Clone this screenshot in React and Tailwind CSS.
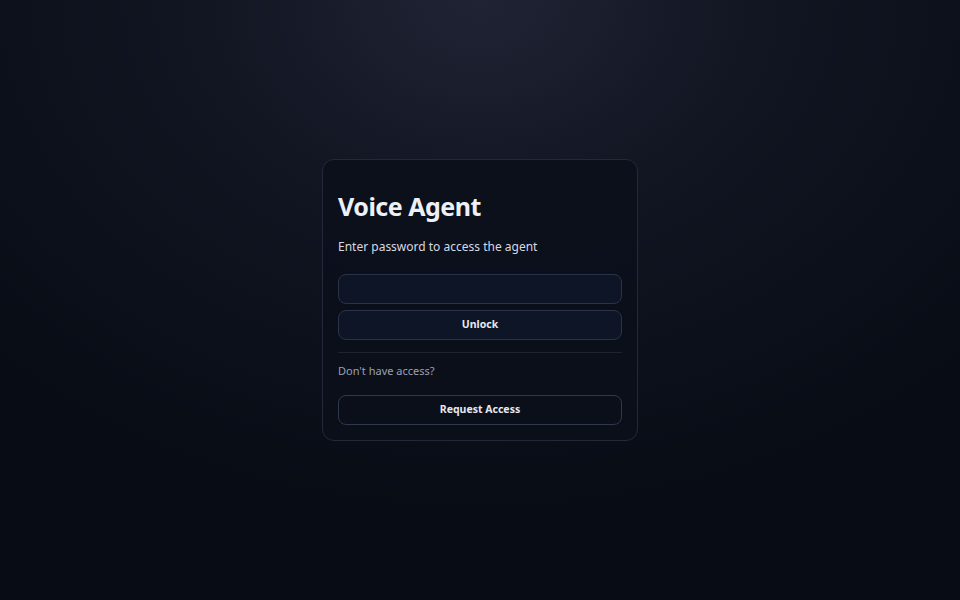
export default function App() {
  return (
    <div
      className="w-full h-[600px] flex items-center justify-center bg-[radial-gradient(ellipse_70%_85%_at_50%_0%,#1f2334_0%,#111521_45%,#080c15_100%)]"
      style={{ fontFamily: '"Noto Sans", sans-serif' }}
    >
      <div className="w-[316px] rounded-[12px] border border-[#222a3a] bg-[#0b101b]/90 px-[15px] pt-[30px] pb-[15px] flex flex-col">
        <h1 className="text-[25px] leading-[32px] font-bold tracking-[-0.02em] text-[#eef0f8]">Voice Agent</h1>
        <p className="mt-[15px] text-[12px] leading-[20px] text-[#d6d9e3]">Enter password to access the agent</p>
        <input
          type="password"
          className="mt-[17px] h-[30px] w-full rounded-[8px] border border-[#2a3348] bg-[#0d1526] outline-none"
        />
        <button className="mt-[6px] h-[30px] w-full rounded-[8px] border border-[#2a3348] bg-[#0d1526] text-[10.5px] font-bold text-[#e6e8f0]">
          Unlock
        </button>
        <div className="mt-[12px] h-[1px] bg-[#1d2330]" />
        <p className="mt-[10px] text-[11px] leading-[16px] text-[#9aa1b3]">Don't have access?</p>
        <button className="mt-[16px] h-[30px] w-full rounded-[8px] border border-[#2f3850] bg-[#0a0f1a] text-[10.5px] font-bold text-[#e6e8f0]">
          Request Access
        </button>
      </div>
    </div>
  );
}
